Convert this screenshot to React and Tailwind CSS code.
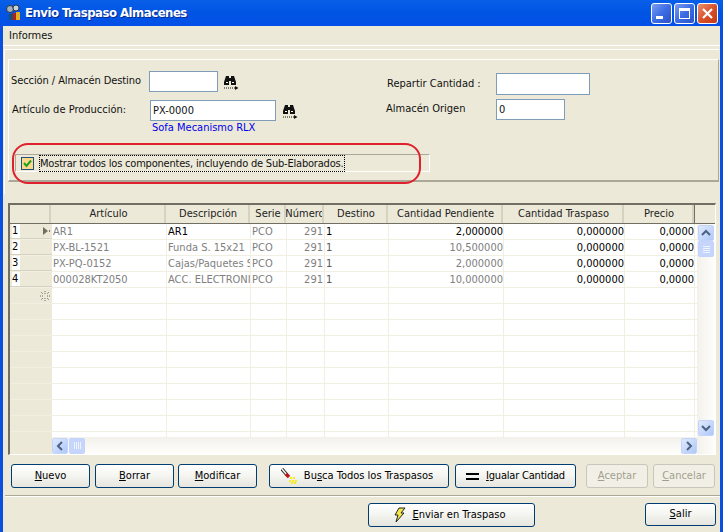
import React from 'react';

const COLS = [
  { name: 'Artículo', w: 115 },
  { name: 'Descripción', w: 84 },
  { name: 'Serie', w: 36 },
  { name: 'Número', w: 38 },
  { name: 'Destino', w: 64 },
  { name: 'Cantidad Pendiente', w: 115 },
  { name: 'Cantidad Traspaso', w: 121 },
  { name: 'Precio', w: 70 },
];

const ROWS = [
  ['AR1', 'AR1', 'PCO', '291', '1', '2,000000', '0,000000', '0,0000'],
  ['PX-BL-1521', 'Funda S. 15x21', 'PCO', '291', '1', '10,500000', '0,000000', '0,0000'],
  ['PX-PQ-0152', 'Cajas/Paquetes S', 'PCO', '291', '1', '2,000000', '0,000000', '0,0000'],
  ['000028KT2050', 'ACC. ELECTRONICO', 'PCO', '291', '1', '10,000000', '0,000000', '0,0000'],
];

const Binoculars = () => (
  <svg width="16" height="16" viewBox="0 0 16 16" className="shrink-0">
    <path d="M1 8 L3 2 H6 V4 H8 V2 H11 L13 8 V11 H8 V7 H6 V11 H1 Z" fill="#111" />
    <rect x="3" y="8" width="2" height="1" fill="#fff" />
    <rect x="9" y="8" width="2" height="1" fill="#fff" />
    <path d="M1 14 H13" stroke="#111" strokeDasharray="1 1" />
    <path d="M12 12 L15.5 14 L12 16 Z" fill="#111" />
  </svg>
);

const WinBtn = ({ red, children }) => (
  <div className={`w-[21px] h-[21px] rounded-[3px] border border-white flex items-center justify-center ${red ? 'bg-gradient-to-br from-[#e8906f] via-[#d9512a] to-[#c23a12]' : 'bg-gradient-to-br from-[#7d9cf0] via-[#3c6de4] to-[#2a52c8]'}`}>
    {children}
  </div>
);

const Button = ({ w, h = 'h-[24px]', disabled, children }) => (
  <button className={`${w} ${h} shrink-0 rounded-[3px] border flex items-center justify-center ${disabled ? 'border-[#c9c7ba] text-[#a19f91] bg-[#f2f0e6]' : 'border-[#003c74] text-black bg-gradient-to-b from-white via-[#f4f4f0] to-[#e6e5de]'}`}>
    {children}
  </button>
);

const ScrollBtn = ({ d, className = '' }) => (
  <div className={`w-[16px] h-[16px] shrink-0 rounded-[2px] border border-[#c3d3fb] bg-gradient-to-br from-[#e1eafe] to-[#aec8f7] flex items-center justify-center ${className}`}>
    <svg width="10" height="10" viewBox="0 0 10 10">
      <path d={d} fill="none" stroke="#4d6185" strokeWidth="2" />
    </svg>
  </div>
);

const Row = ({ row, index, selected }) => (
  <div className="flex h-[16px] border-b border-[#f1efe2]">
    <div className="w-[42px] shrink-0 flex items-center bg-[#ece9d8] border-b border-[#d6d2c2] pl-[2px] pr-[1px]">
      <span className="bg-white w-[8px] h-[14px] leading-[14px] text-black">{index + 1}</span>
      {selected && (
        <svg width="10" height="10" viewBox="0 0 10 10" className="ml-auto">
          <path d="M2 1 L7 5 L2 9 Z" fill="#716f64" />
          <rect x="8" y="4" width="1" height="2" fill="#716f64" />
        </svg>
      )}
    </div>
    {COLS.map((col, i) => (
      <div
        key={col.name}
        className={`shrink-0 h-full leading-[15px] overflow-hidden whitespace-nowrap border-r border-[#f1efe2] ${i === 3 ? 'text-right pr-[1px]' : i >= 5 ? 'text-right' : 'pl-[1px]'} ${i >= 6 || (selected && (i === 1 || i === 4 || i === 5)) ? 'text-black' : i === 4 ? 'text-[#555]' : 'text-[#808080]'}`}
        style={{ width: col.w }}
      >
        {row[i]}
      </div>
    ))}
  </div>
);

const EmptyRow = ({ star }) => (
  <div className="flex h-[16px] border-b border-[#f1efe2]">
    <div className="w-[42px] shrink-0 flex items-center justify-end bg-[#ece9d8] pr-[2px]">
      {star && (
        <svg width="10" height="10" viewBox="0 0 10 10">
          <path d="M5 0V3M5 7V10M0 5H3M7 5H10M1 1L3 3M7 7L9 9M9 1L7 3M3 7L1 9" stroke="#716f64" strokeDasharray="1 1" />
        </svg>
      )}
    </div>
    {COLS.map((col) => (
      <div key={col.name} className="shrink-0 border-r border-[#f1efe2]" style={{ width: col.w }} />
    ))}
  </div>
);

export default function App() {
  return (
    <div className="w-[723px] h-[532px] overflow-hidden flex flex-col bg-[#ece9d8] text-[11px] text-[#111] font-['DejaVu_Sans_Condensed','Liberation_Sans',sans-serif]">
      {/* Title bar */}
      <div className="h-[26px] shrink-0 flex items-center pl-[5px] pr-[5px] bg-gradient-to-b from-[#0a5fe8] via-[#0054e3] to-[#0350e8]">
        <svg width="18" height="18" viewBox="0 0 18 18" className="shrink-0">
          <circle cx="5" cy="5" r="3.5" fill="#9fb3c0" stroke="#334" />
          <circle cx="11" cy="4" r="3" fill="#c8d4dc" stroke="#334" />
          <rect x="8" y="9" width="3" height="7" fill="#b02020" />
          <rect x="11" y="8" width="4" height="8" fill="#e0b020" />
          <rect x="4" y="10" width="4" height="6" fill="#205070" />
        </svg>
        <span className="ml-[2px] text-white font-bold text-[13px] tracking-[-0.5px] [text-shadow:1px_1px_0_#0a2a90]">Envio Traspaso Almacenes</span>
        <div className="ml-auto flex gap-[2px]">
          <WinBtn>
            <div className="w-[7px] h-[3px] bg-white mt-[9px] mr-[4px]" />
          </WinBtn>
          <WinBtn>
            <div className="w-[11px] h-[11px] border border-white border-t-[3px]" />
          </WinBtn>
          <WinBtn red>
            <svg width="13" height="13" viewBox="0 0 13 13">
              <path d="M2 2 L11 11 M11 2 L2 11" stroke="#fff" strokeWidth="2.2" />
            </svg>
          </WinBtn>
        </div>
      </div>

      <div className="flex-1 flex border-l-[3px] border-r-[3px] border-[#0a50e0] min-h-0">
        <div className="flex-1 flex flex-col min-w-0">
          {/* Menu */}
          <div className="h-[19px] shrink-0 pl-[6px] pt-[2px] leading-[15px]">Informes</div>
          <div className="h-[1px] bg-white shrink-0" />

          {/* Upper panel */}
          <div className="mt-[3px] ml-[1px] mr-[1px] border-t border-l border-white pt-[9px] pl-[3px] h-[145px] shrink-0">
            <div className="relative h-[123px] border-t border-l border-white border-r border-r-[#aca899] border-b-2 border-b-[#aca899] pl-[2px]">
              <div className="flex h-[72px]">
                <div className="w-[375px] shrink-0 flex flex-col">
                  <div className="flex items-center h-[21px] mt-[11px]">
                    <span className="w-[138px] shrink-0 tracking-[-0.08px]">Sección / Almacén Destino</span>
                    <div className="w-[69px] h-[21px] bg-white border border-[#7f9db9]" />
                    <div className="ml-[5px]"><Binoculars /></div>
                  </div>
                  <div className="flex items-center h-[21px] mt-[8px]">
                    <span className="w-[139px] shrink-0 pl-[1px]">Artículo de Producción:</span>
                    <div className="w-[126px] h-[21px] bg-white border border-[#7f9db9] pl-[2px] leading-[19px]">PX-0000</div>
                    <div className="ml-[6px]"><Binoculars /></div>
                  </div>
                  <div className="pl-[141px] text-[#0000ee] leading-[14px]">Sofa Mecanismo RLX</div>
                </div>
                <div className="flex-1 flex flex-col">
                  <div className="flex items-center h-[22px] mt-[13px]">
                    <span className="w-[110px] shrink-0 pl-[1px]">Repartir Cantidad :</span>
                    <div className="w-[94px] h-[22px] bg-white border border-[#7f9db9]" />
                  </div>
                  <div className="flex items-center h-[21px] mt-[4px]">
                    <span className="w-[110px] shrink-0">Almacén Origen</span>
                    <div className="w-[69px] h-[21px] bg-white border border-[#7f9db9] pl-[2px] leading-[19px]">0</div>
                  </div>
                </div>
              </div>

              {/* Checkbox frame */}
              <div className="mt-[22px] ml-[4px] w-[415px] h-[18px] border-t border-t-[#aca899] border-l border-l-[#aca899] border-b border-b-white border-r border-r-white flex items-center pl-[5px]">
                <div className="w-[13px] h-[13px] shrink-0 border border-[#1c5180] bg-[#fcd88a] flex items-center justify-center">
                  <svg width="9" height="9" viewBox="0 0 9 9">
                    <path d="M1 4 L3.5 7 L8 1.5" fill="none" stroke="#21a121" strokeWidth="2" />
                  </svg>
                </div>
                <span className="ml-[6px] outline-1 outline-dotted outline-black leading-[15px] pr-[1px] whitespace-nowrap tracking-[-0.2px]">Mostrar todos los componentes, incluyendo de Sub-Elaborados.</span>
              </div>

              {/* Red hand-drawn marker */}
              <div className="absolute left-[3px] top-[83px] w-[409px] h-[41px] rounded-[16px] border-2 border-[#e0202c] pointer-events-none" />
            </div>
          </div>

          {/* Grid */}
          <div className="mt-[9px] ml-[5px] mr-[4px] h-[252px] shrink-0 border-t-2 border-l-2 border-t-[#716f64] border-l-[#716f64] border-b border-r border-b-white border-r-white flex flex-col bg-[#ece9d8] overflow-hidden">
            <div className="flex h-[19px] shrink-0 border-b border-[#716f64] leading-[18px] text-[#222]">
              <div className="w-[41px] shrink-0 border-r-2 border-[#d6d2c2]" />
              {COLS.map((col) => (
                <div key={col.name} className="shrink-0 flex justify-center overflow-hidden whitespace-nowrap border-r-2 border-[#d6d2c2] pl-[2px]" style={{ width: col.w }}>
                  <span className="shrink-0">{col.name}</span>
                </div>
              ))}
              <div className="flex-1 border-l border-[#716f64]" />
            </div>

            <div className="flex flex-1 min-h-0">
              <div className="flex-1 min-w-0 flex flex-col">
                <div className="flex-1 min-h-0 overflow-hidden bg-white">
                  {ROWS.map((row, i) => (
                    <Row key={row[0]} row={row} index={i} selected={i === 0} />
                  ))}
                  <EmptyRow star />
                  {Array.from({ length: 9 }).map((_, i) => (
                    <EmptyRow key={i} />
                  ))}
                </div>
                {/* Horizontal scrollbar */}
                <div className="h-[17px] shrink-0 flex bg-[#ece9d8]">
                  <div className="w-[42px] shrink-0" />
                  <div className="flex-1 flex items-center bg-gradient-to-b from-[#f3f1ec] to-[#fefefb]">
                    <ScrollBtn d="M7 1 L3 5 L7 9" />
                    <div className="ml-[1px] w-[16px] h-[16px] rounded-[2px] border border-[#c3d3fb] bg-[#c5d5fb] flex items-center justify-center gap-[1px]">
                      <div className="w-[1px] h-[7px] bg-[#eef3fe]" />
                      <div className="w-[1px] h-[7px] bg-[#eef3fe]" />
                      <div className="w-[1px] h-[7px] bg-[#eef3fe]" />
                      <div className="w-[1px] h-[7px] bg-[#eef3fe]" />
                    </div>
                    <ScrollBtn d="M3 1 L7 5 L3 9" className="ml-auto" />
                  </div>
                </div>
              </div>
              {/* Vertical scrollbar */}
              <div className="w-[18px] shrink-0 flex flex-col items-center pt-[1px] pb-[18px] bg-gradient-to-r from-[#f3f1ec] to-[#fefefb]">
                <ScrollBtn d="M1 7 L5 3 L9 7" />
                <div className="w-[16px] h-[16px] rounded-[2px] border border-[#c3d3fb] bg-[#c5d5fb] flex flex-col items-center justify-center gap-[1px]">
                  <div className="w-[7px] h-[1px] bg-[#eef3fe]" />
                  <div className="w-[7px] h-[1px] bg-[#eef3fe]" />
                  <div className="w-[7px] h-[1px] bg-[#eef3fe]" />
                  <div className="w-[7px] h-[1px] bg-[#eef3fe]" />
                </div>
                <ScrollBtn d="M1 3 L5 7 L9 3" className="mt-auto" />
              </div>
            </div>
          </div>

          {/* Action buttons */}
          <div className="mt-[9px] ml-[8px] flex h-[24px] shrink-0">
            <Button w="w-[79px]"><span><u>N</u>uevo</span></Button>
            <div className="w-[5px]" />
            <Button w="w-[79px]"><span><u>B</u>orrar</span></Button>
            <div className="w-[4px]" />
            <Button w="w-[79px]"><span><u>M</u>odificar</span></Button>
            <div className="w-[12px]" />
            <Button w="w-[180px]">
              <svg width="16" height="16" viewBox="0 0 16 16" className="mr-[7px] -ml-[4px]">
                <path d="M1 1 L6 7" stroke="#222" strokeWidth="3.4" />
                <path d="M1 1 L6 7" stroke="#f4f4f4" strokeWidth="1.6" />
                <path d="M5 6 L8 9" stroke="#c01010" strokeWidth="3.4" />
                <path d="M9 9h2v2H9zM12 9h2v2h-2zM8 12h2v2H8zM11 12h2v2h-2zM14 12h2v2h-2zM10 14h2v2h-2zM13 14h2v2h-2z" fill="#f5ec1a" />
              </svg>
              <span>Bu<u>s</u>ca Todos los Traspasos</span>
            </Button>
            <div className="w-[6px]" />
            <Button w="w-[121px]">
              <div className="flex flex-col gap-[3px] mr-[7px]">
                <div className="w-[13px] h-[2px] bg-black" />
                <div className="w-[13px] h-[2px] bg-black" />
              </div>
              <span className="tracking-[-0.2px]"><u>I</u>gualar Cantidad</span>
            </Button>
            <div className="w-[10px]" />
            <Button w="w-[62px]" disabled><span><u>A</u>ceptar</span></Button>
            <div className="w-[5px]" />
            <Button w="w-[62px]" disabled><span><u>C</u>ancelar</span></Button>
          </div>

          <div className="mt-[7px] ml-[2px] h-[2px] shrink-0 bg-[#aca899] border-b border-white" />

          {/* Bottom buttons */}
          <div className="mt-[6px] flex shrink-0">
            <div className="ml-[365px]">
              <Button w="w-[167px]">
                <svg width="14" height="16" viewBox="0 0 14 16" className="mr-[5px] -ml-[4px]">
                  <path d="M6 1 H12 L8 6 H11 L3 15 L5 8 H2 Z" fill="#f4e84a" stroke="#222" />
                </svg>
                <span><u>E</u>nviar en Traspaso</span>
              </Button>
            </div>
            <div className="ml-[110px]">
              <Button w="w-[71px]" h="h-[23px]"><span><u>S</u>alir</span></Button>
            </div>
          </div>
        </div>
      </div>
    </div>
  );
}
